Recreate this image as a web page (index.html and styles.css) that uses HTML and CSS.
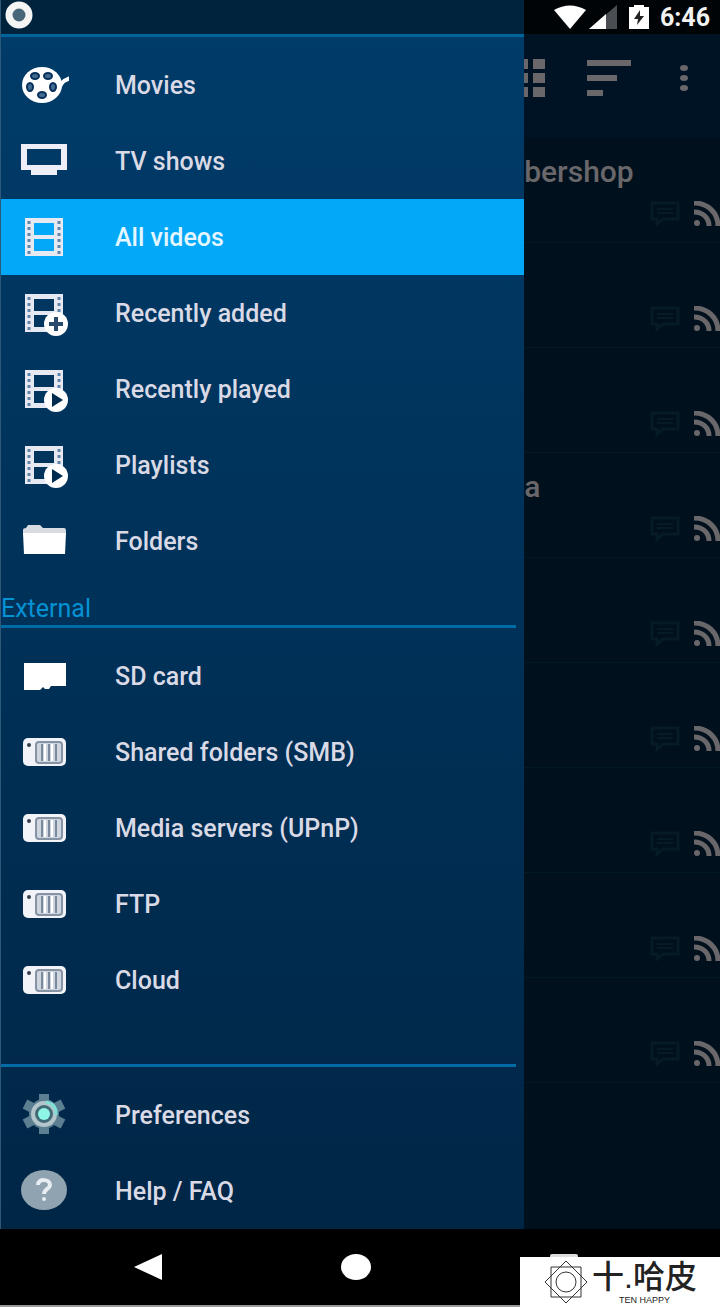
FILE: index.html
```html
<!DOCTYPE html>
<html lang="en">
<head>
    <meta charset="UTF-8">
    <meta name="viewport" content="width=device-width, initial-scale=1">
    <title>All videos</title>
    <link rel="stylesheet" href="styles.css">
</head>
<body>
    <!-- Shared icon shapes -->
    <svg class="sprite" aria-hidden="true">
        <symbol id="film" viewBox="0 0 50 50">
            <path fill="currentColor" fill-rule="evenodd" d="M6 6h38v38H6zM15 11v12h20V11zM15 27v12h20V27z"/>
            <path stroke="#5f86aa" stroke-width="3" stroke-dasharray="3 3" d="M10 9v33M40 9v33"/>
        </symbol>
        <symbol id="film-play" viewBox="0 0 50 50">
            <use href="#film"/>
            <circle cx="37" cy="36" r="12" fill="#fff"/>
            <path fill="#002c50" d="M33 29l11 7-11 7z"/>
        </symbol>
        <symbol id="server" viewBox="0 0 50 50">
            <rect x="4" y="11" width="43" height="28" rx="5" fill="#f2f3f8"/>
            <circle cx="10" cy="18" r="2" fill="#333d4c"/>
            <rect x="17" y="15" width="26" height="21" rx="3" fill="#cfd6df" stroke="#8593a5" stroke-width="2"/>
            <path stroke="#7b899d" stroke-width="2" d="M23 17v17M30 17v17M37 17v17"/>
            <path stroke="#fff" stroke-width="2" d="M26 17v17M33 17v17"/>
        </symbol>
        <symbol id="chat" viewBox="0 0 30 26">
            <path fill="none" stroke="currentColor" stroke-width="3" d="M2 2h26v16H13l-6 5v-5H2z"/>
            <path stroke="currentColor" stroke-width="2" d="M7 8h16M7 12h16"/>
        </symbol>
        <symbol id="rss" viewBox="0 0 26 26">
            <circle cx="3" cy="22" r="3" fill="currentColor"/>
            <path fill="none" stroke="currentColor" stroke-width="5" d="M0 11c9 0 15 6 15 14M0 2c14 0 24 10 24 23"/>
        </symbol>
    </svg>

    <div class="phone">
        <div class="screen">
            <nav class="drawer">
                <div class="drawer-top">
                    <svg class="record" viewBox="0 0 30 30"><circle cx="15" cy="15" r="10" fill="#48667a" stroke="#f4f4f4" stroke-width="7"/></svg>
                </div>
                <ul class="menu">
                    <li><a href="#">
                        <svg class="icon" viewBox="0 0 50 50">
                            <path fill="none" stroke="#fff" stroke-width="4" d="M37 30c4-1 4-6 8-9l6-3"/>
                            <ellipse cx="23" cy="25" rx="20" ry="18" fill="#fff"/>
                            <g fill="#426b90" stroke="#06305b" stroke-width="2">
                                <ellipse cx="16" cy="16" rx="4" ry="3"/>
                                <ellipse cx="29" cy="16" rx="4" ry="3"/>
                                <ellipse cx="11" cy="27" rx="3" ry="4"/>
                                <ellipse cx="34" cy="27" rx="3" ry="4"/>
                                <ellipse cx="23" cy="35" rx="4" ry="3"/>
                            </g>
                        </svg>
                        Movies</a></li>
                    <li><a href="#">
                        <svg class="icon" viewBox="0 0 50 50">
                            <path fill="#eeeef8" fill-rule="evenodd" d="M2 8h46v26H38v5H12v-5H2zM8 13v16h34V13z"/>
                        </svg>
                        TV shows</a></li>
                    <li><a href="#" class="active"><svg class="icon"><use href="#film"/></svg>All videos</a></li>
                    <li><a href="#">
                        <svg class="icon" viewBox="0 0 50 50">
                            <use href="#film"/>
                            <circle cx="37" cy="36" r="12" fill="#fff"/>
                            <path stroke="#26496c" stroke-width="4" d="M37 29v14M30 36h14"/>
                        </svg>
                        Recently added</a></li>
                    <li><a href="#"><svg class="icon"><use href="#film-play"/></svg>Recently played</a></li>
                    <li><a href="#"><svg class="icon"><use href="#film-play"/></svg>Playlists</a></li>
                    <li><a href="#">
                        <svg class="icon" viewBox="0 0 50 50">
                            <path fill="#d9dbe3" d="M4 17V14q0-2 3-2l2-3h12l3 3h21q2 0 2 3v4H4z"/>
                            <path fill="#fff" d="M4 17h43l-1 21H5z"/>
                        </svg>
                        Folders</a></li>
                </ul>

                <h2 class="section">External</h2>
                <ul class="menu">
                    <li><a href="#">
                        <svg class="icon" viewBox="0 0 50 50">
                            <path fill="#fff" d="M5 12h42v23H32l-2 3h-4l-2-2-3 3H5z"/>
                        </svg>
                        SD card</a></li>
                    <li><a href="#"><svg class="icon"><use href="#server"/></svg>Shared folders (SMB)</a></li>
                    <li><a href="#"><svg class="icon"><use href="#server"/></svg>Media servers (UPnP)</a></li>
                    <li><a href="#"><svg class="icon"><use href="#server"/></svg>FTP</a></li>
                    <li><a href="#"><svg class="icon"><use href="#server"/></svg>Cloud</a></li>
                </ul>

                <ul class="menu menu-bottom">
                    <li><a href="#">
                        <svg class="icon" viewBox="0 0 50 50">
                            <path stroke="#5d7f92" stroke-width="10" d="M25 4v40M6 14l38 20M6 34l38-20"/>
                            <circle cx="25" cy="24" r="15" fill="#5d7f92"/>
                            <circle cx="25" cy="24" r="11" fill="#426b77" stroke="#b4c6cc" stroke-width="4"/>
                            <path fill="none" stroke="#7fe0d8" stroke-width="3" d="M27 12q11 2 10 13"/>
                            <circle cx="25" cy="24" r="6" fill="#8ff5e7"/>
                        </svg>
                        Preferences</a></li>
                    <li><a href="#">
                        <svg class="icon" viewBox="0 0 50 50">
                            <ellipse cx="25" cy="24" rx="23" ry="20" fill="#8fa4b0"/>
                            <path fill="none" stroke="#e8edf2" stroke-width="4" d="M19 19c0-7 12-6 12 0 0 4-6 4-6 9"/>
                            <circle cx="25" cy="33" r="2" fill="#e8edf2"/>
                        </svg>
                        Help / FAQ</a></li>
                </ul>
            </nav>

            <main class="content">
                <div class="status">
                    <svg class="wifi" viewBox="0 0 32 24"><path fill="#fff" d="M0 5Q16-4 32 5L16 24z"/></svg>
                    <svg class="signal" viewBox="0 0 28 24"><path fill="#4a4e52" d="M28 0v24H0z"/><path fill="#fff" d="M17 9v15H0z"/></svg>
                    <svg class="battery" viewBox="0 0 20 24"><path fill="#fff" d="M5 2V0h10v2h5v22H0V2z"/><path fill="#222" d="M11 5l-6 9h4l-1 6 7-9h-4z"/></svg>
                    <span>6:46</span>
                </div>
                <div class="toolbar">
                    <button aria-label="Grid view"><svg class="grid" viewBox="0 0 22 40"><path fill="currentColor" d="M0 1h4v10H0zM9 1h12v10H9zM0 15h4v10H0zM9 15h12v10H9zM0 29h4v10H0zM9 29h12v10H9z"/></svg></button>
                    <button aria-label="Sort"><svg class="sort" viewBox="0 0 46 40"><path stroke="currentColor" stroke-width="6" d="M1 5h44M1 20h30M1 35h16"/></svg></button>
                    <button aria-label="More options"><svg class="more" viewBox="0 0 8 28"><g fill="currentColor"><ellipse cx="4" cy="4" rx="4" ry="3"/><ellipse cx="4" cy="14" rx="4" ry="3"/><ellipse cx="4" cy="24" rx="4" ry="3"/></g></svg></button>
                </div>
                <ul class="videos">
                    <li><h3>bershop</h3><svg class="chat"><use href="#chat"/></svg><svg class="rss"><use href="#rss"/></svg></li>
                    <li><svg class="chat"><use href="#chat"/></svg><svg class="rss"><use href="#rss"/></svg></li>
                    <li><svg class="chat"><use href="#chat"/></svg><svg class="rss"><use href="#rss"/></svg></li>
                    <li><h3>a</h3><svg class="chat"><use href="#chat"/></svg><svg class="rss"><use href="#rss"/></svg></li>
                    <li><svg class="chat"><use href="#chat"/></svg><svg class="rss"><use href="#rss"/></svg></li>
                    <li><svg class="chat"><use href="#chat"/></svg><svg class="rss"><use href="#rss"/></svg></li>
                    <li><svg class="chat"><use href="#chat"/></svg><svg class="rss"><use href="#rss"/></svg></li>
                    <li><svg class="chat"><use href="#chat"/></svg><svg class="rss"><use href="#rss"/></svg></li>
                    <li><svg class="chat"><use href="#chat"/></svg><svg class="rss"><use href="#rss"/></svg></li>
                </ul>
            </main>
        </div>

        <div class="navbar">
            <button aria-label="Back"><svg viewBox="0 0 30 30"><path fill="#fff" d="M1 15L29 2v26z"/></svg></button>
            <button aria-label="Home"><svg viewBox="0 0 30 30"><ellipse cx="15" cy="15" rx="15" ry="13" fill="#fff"/></svg></button>
            <button aria-label="Recent apps"><svg viewBox="0 0 30 30"><rect x="1" y="2" width="28" height="26" rx="2" fill="#ddd"/></svg></button>
        </div>

        <!-- Logo over the bottom corner -->
        <div class="brand">
            <svg class="brand-mark" viewBox="0 0 44 44" fill="none" stroke="#333">
                <path d="M7 7h30v30H7zM22 1l21 21-21 21L1 22z"/>
                <circle cx="22" cy="22" r="10"/>
            </svg>
            <div class="brand-text">
                <strong lang="zh">十.哈皮</strong>
                <small>TEN HAPPY</small>
            </div>
        </div>
    </div>
</body>
</html>
```
FILE: styles.css
```css
* {
    box-sizing: border-box;
}

body {
    margin: 0;
    background: #000;
    font-family: Roboto, "Liberation Sans", sans-serif;
}

ul {
    list-style: none;
    margin: 0;
    padding: 0;
}

svg {
    display: block;
    flex: none;
}

button {
    padding: 0;
    border: none;
    background: none;
    color: inherit;
}

.sprite {
    position: absolute;
    width: 0;
    height: 0;
}

.phone {
    position: relative;
    min-height: 100vh;
    display: flex;
    flex-direction: column;
}

.screen {
    display: flex;
}

/* Left drawer */
.drawer {
    width: 72.8%;
    background: linear-gradient(#003c6a, #002646);
    border-left: 1px solid #2d5878;
}

.drawer-top {
    height: 37px;
    padding: 0 3px;
    background: #00233d;
    border-bottom: 3px solid #00649c;
}

.record {
    width: 30px;
    height: 30px;
}

.menu {
    padding-top: 10px;
}

.menu a {
    display: flex;
    align-items: center;
    gap: 46px;
    height: 76px;
    padding-left: 18px;
    color: #dadae6;
    font-size: 25px;
    font-weight: 500;
    text-decoration: none;
}

.menu a.active {
    background: #03a9f8;
    color: #e4f6ff;
}

.icon {
    width: 50px;
    height: 50px;
    color: #e6e9f2;
}

.section {
    margin: 0 8px 0 0;
    height: 49px;
    padding-top: 16px;
    border-bottom: 3px solid #006ba5;
    color: #0492d4;
    font-size: 25px;
    line-height: 28px;
    font-weight: 400;
}

.menu-bottom {
    position: relative;
    margin-top: 46px;
    padding-top: 13px;
}

.menu-bottom::before {
    content: "";
    position: absolute;
    top: 0;
    left: 0;
    right: 8px;
    height: 3px;
    background: #006ba5;
}

/* Video list behind the drawer */
.content {
    flex: 1;
    min-width: 0;
    overflow: hidden;
    background: #00111d;
    color: #6a676b;
}

.status {
    display: flex;
    justify-content: flex-end;
    align-items: center;
    height: 34px;
    padding-right: 10px;
    background: #000407;
    color: #f2f2f2;
    font-size: 25px;
    font-weight: 700;
}

.wifi {
    width: 32px;
    height: 24px;
    margin-right: 3px;
}

.signal {
    width: 28px;
    height: 24px;
    margin-right: 12px;
}

.battery {
    width: 20px;
    height: 24px;
    margin-right: 11px;
}

.toolbar {
    display: flex;
    align-items: center;
    height: 104px;
    padding: 0 32px 16px 0;
    background: #001324;
}

.toolbar button:last-child {
    margin-left: auto;
}

.grid {
    width: 22px;
    height: 40px;
    margin-right: 40px;
}

.sort {
    width: 46px;
    height: 40px;
}

.more {
    width: 8px;
    height: 28px;
}

.videos li {
    display: flex;
    flex-wrap: wrap;
    justify-content: flex-end;
    align-content: flex-end;
    height: 105px;
    padding-bottom: 15px;
    border-bottom: 1px solid #011825;
}

.videos h3 {
    width: 100%;
    margin: 0 0 11px;
    font-size: 30px;
    line-height: 36px;
    font-weight: 500;
}

.chat {
    width: 30px;
    height: 26px;
    margin-right: 14px;
    color: #051b27;
}

.rss {
    width: 26px;
    height: 26px;
}

/* System buttons */
.navbar {
    display: flex;
    flex: 1;
    min-height: 78px;
    padding: 0 52px 0 44px;
    background: #000;
    border-bottom: 2px solid #999;
}

.navbar button {
    display: flex;
    flex: 1;
    justify-content: center;
    align-items: center;
}

.navbar svg {
    width: 30px;
    height: 30px;
}

.brand {
    position: absolute;
    right: 0;
    bottom: 0;
    display: flex;
    align-items: center;
    gap: 4px;
    width: 200px;
    height: 50px;
    padding-left: 24px;
    background: #fff;
    color: #222;
}

.brand-mark {
    width: 44px;
    height: 44px;
}

.brand-text {
    display: flex;
    flex-direction: column;
    align-items: center;
}

.brand-text strong {
    font-family: "Liberation Sans", "Noto Sans CJK SC", sans-serif;
    font-size: 32px;
    line-height: 36px;
    font-weight: 500;
}

.brand-text small {
    font-family: "Liberation Sans", sans-serif;
    font-size: 9px;
    line-height: 10px;
}
```
